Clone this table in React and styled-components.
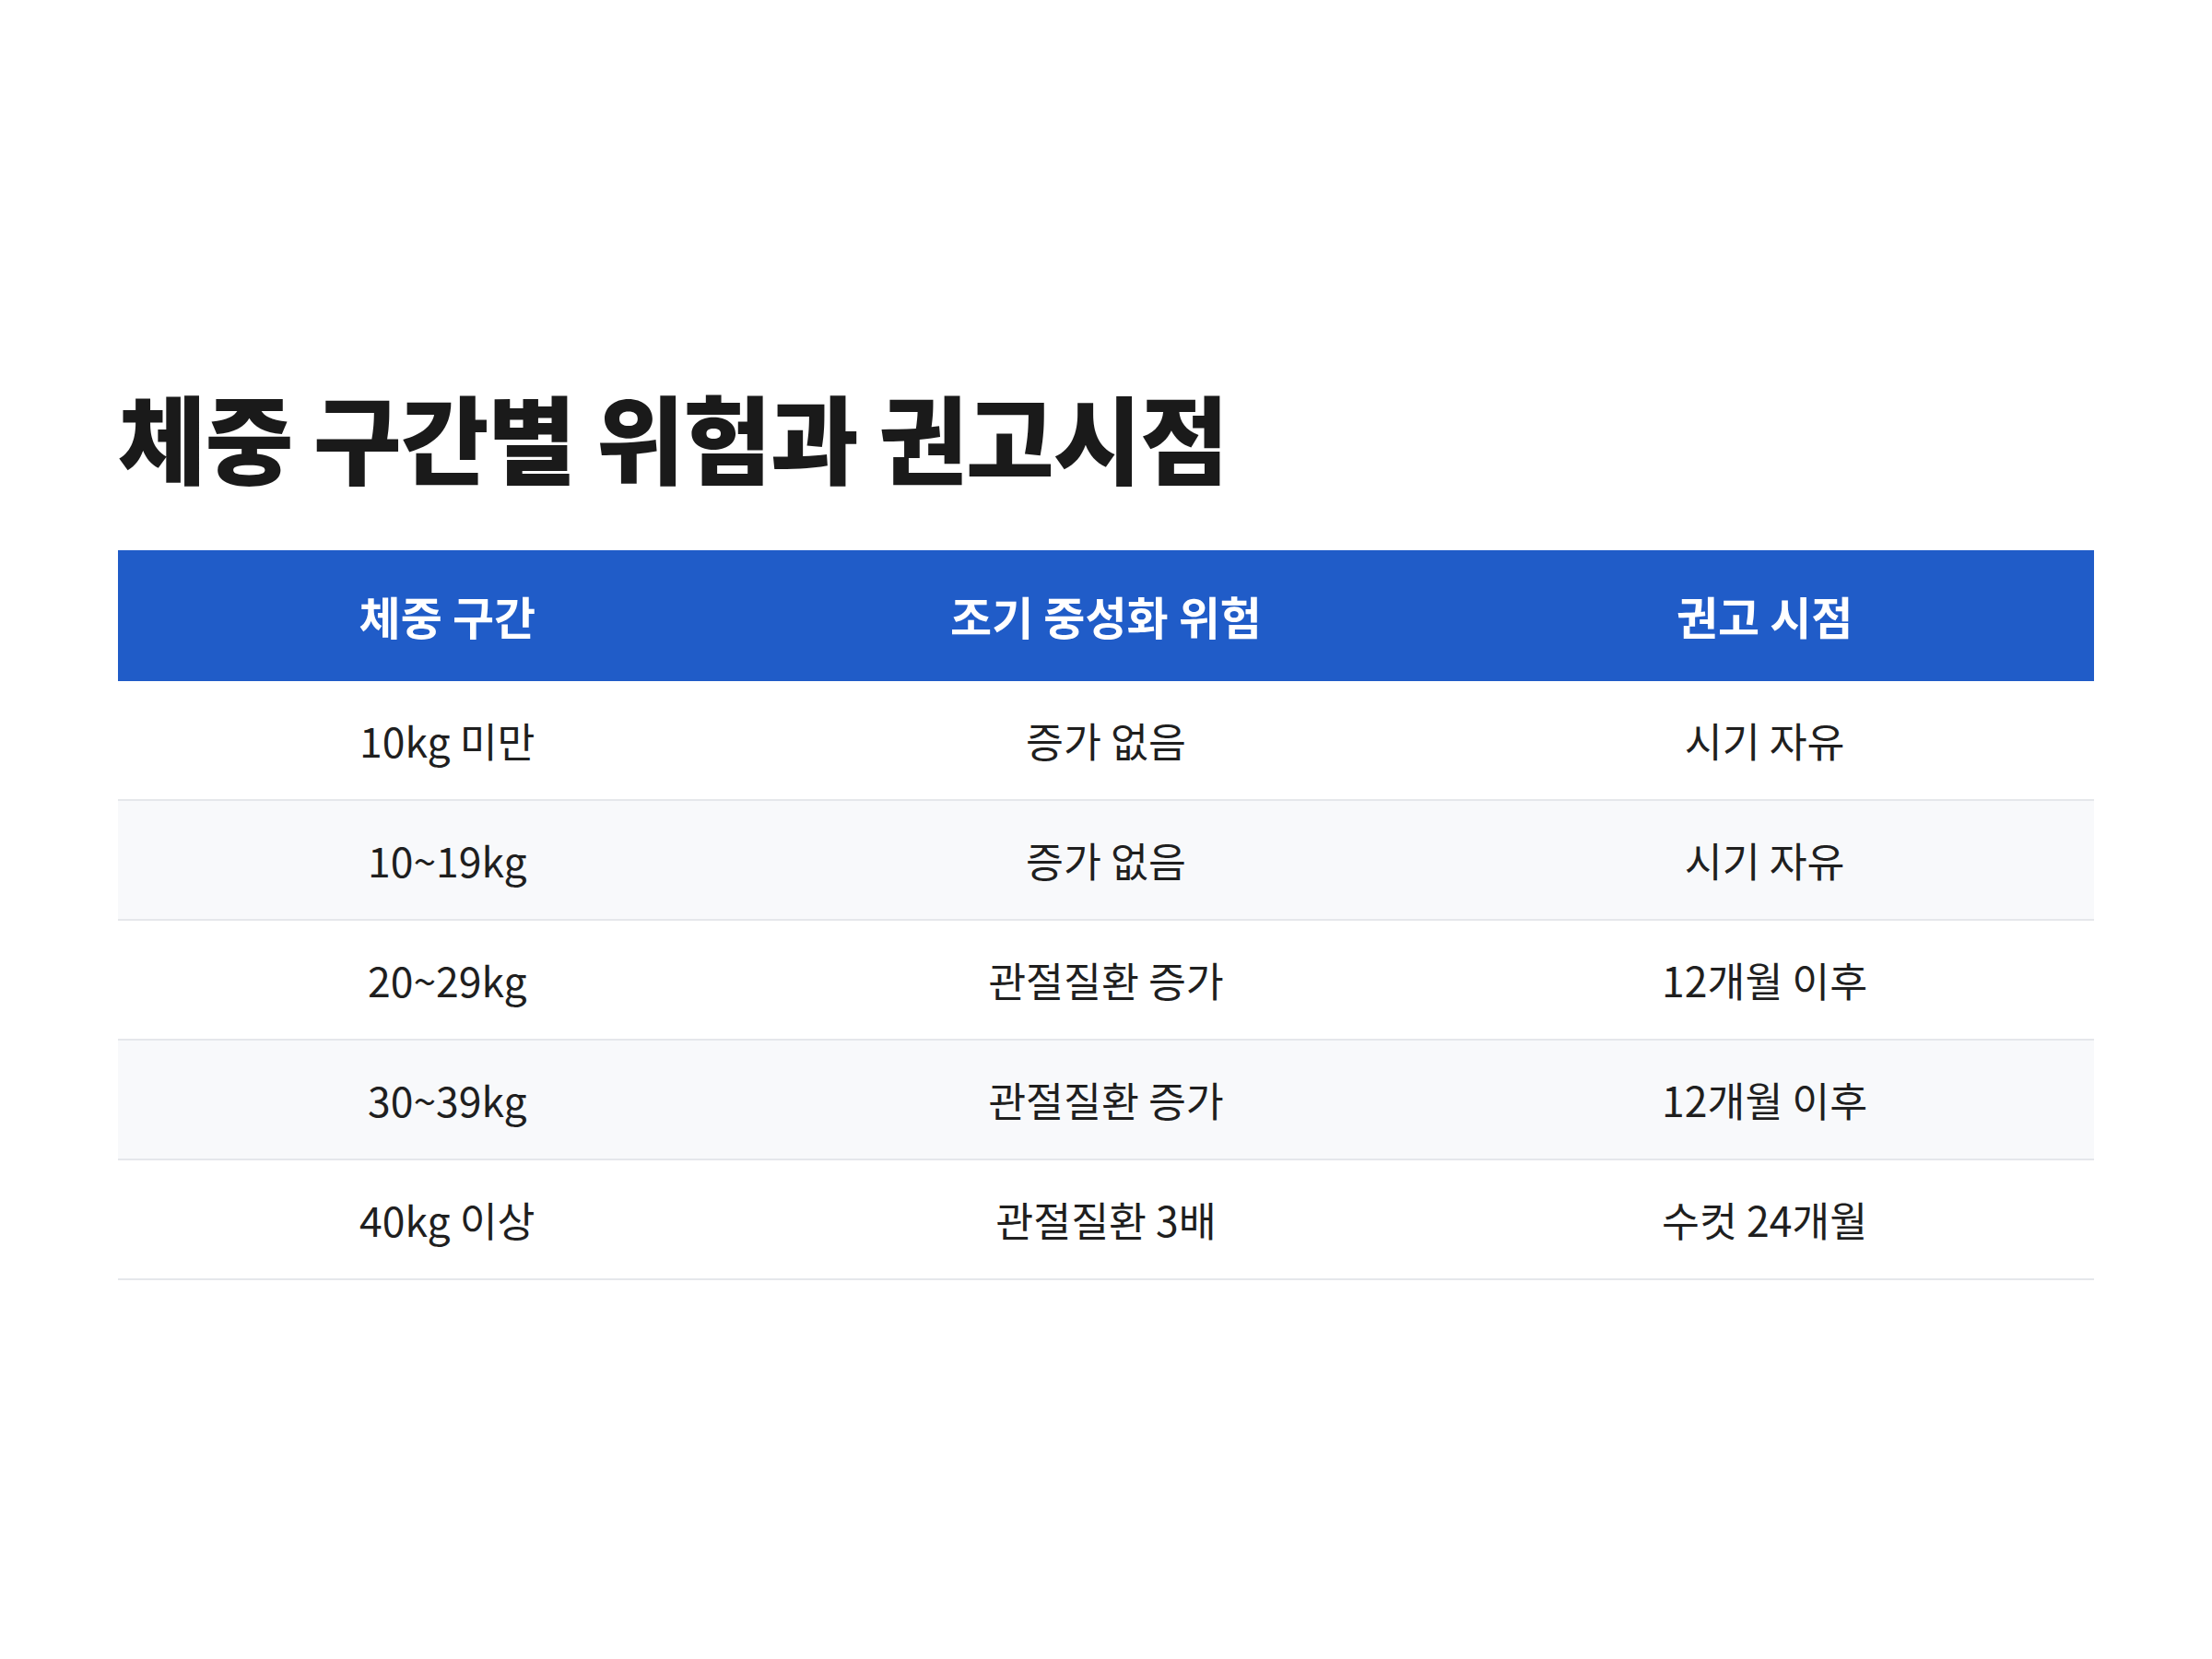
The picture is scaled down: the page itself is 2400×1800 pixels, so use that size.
import styled, { createGlobalStyle } from "styled-components";

const GlobalStyle = createGlobalStyle`
  html, body {
    margin: 0;
    padding: 0;
    background: #ffffff;
  }
  body {
    font-family: "Noto Sans CJK KR", "Noto Sans", sans-serif;
    color: #1a1a1a;
  }
`;

const Page = styled.div`
  min-height: 100vh;
  box-sizing: border-box;
  padding: 0 128px;
  display: flex;
  flex-direction: column;
  justify-content: center;
`;

const Title = styled.h1`
  margin: 0 0 61px;
  font-size: 104px;
  font-weight: 900;
  line-height: 1.2;
  letter-spacing: -0.01em;
  color: #1a1a1a;
`;

const Table = styled.table`
  width: 100%;
  border-collapse: collapse;
  table-layout: fixed;
`;

const HeadCell = styled.th`
  height: 142px;
  padding: 0;
  background: #205cc8;
  color: #ffffff;
  font-size: 49px;
  font-weight: 700;
  text-align: center;
`;

const Row = styled.tr`
  background: ${(props) => (props.$striped ? "#f8f9fb" : "#ffffff")};
  border-bottom: 2px solid #e5e7eb;
`;

const Cell = styled.td`
  height: 128px;
  padding: 0;
  font-size: 44.5px;
  font-weight: 400;
  text-align: center;
  color: #1f1f1f;
`;

const rows = [
  ["10kg 미만", "증가 없음", "시기 자유"],
  ["10~19kg", "증가 없음", "시기 자유"],
  ["20~29kg", "관절질환 증가", "12개월 이후"],
  ["30~39kg", "관절질환 증가", "12개월 이후"],
  ["40kg 이상", "관절질환 3배", "수컷 24개월"],
];

export default function App() {
  return (
    <>
      <GlobalStyle />
      <Page>
        <Title>체중 구간별 위험과 권고시점</Title>
        <Table>
          <thead>
            <tr>
              <HeadCell>체중 구간</HeadCell>
              <HeadCell>조기 중성화 위험</HeadCell>
              <HeadCell>권고 시점</HeadCell>
            </tr>
          </thead>
          <tbody>
            {rows.map((r, i) => (
              <Row key={i} $striped={i % 2 === 1}>
                {r.map((c, j) => (
                  <Cell key={j}>{c}</Cell>
                ))}
              </Row>
            ))}
          </tbody>
        </Table>
      </Page>
    </>
  );
}
